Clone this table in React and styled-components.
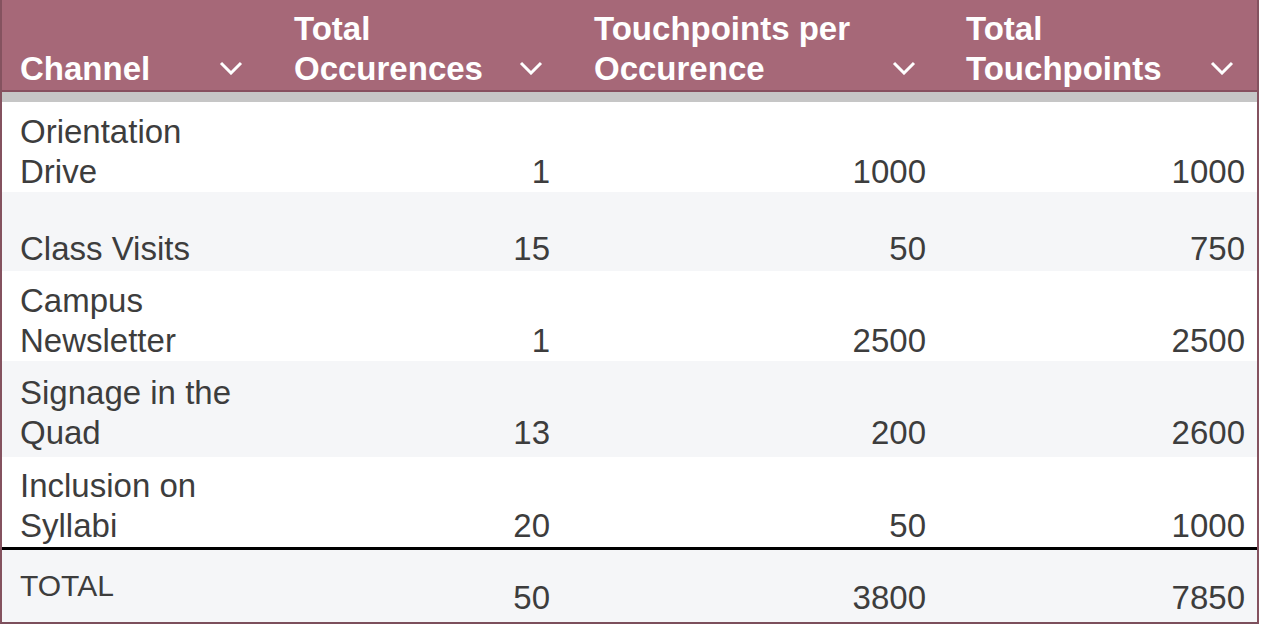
import React from "react";
import styled, { createGlobalStyle } from "styled-components";

const GlobalStyle = createGlobalStyle`
  body {
    margin: 0;
    background: #ffffff;
    font-family: "Liberation Sans", Arial, sans-serif;
  }
`;

const COLS = "274px 300px 372px 1fr";

const Table = styled.div`
  width: 1259px;
  border-left: 2px solid #84525f;
  border-right: 2px solid #84525f;
  border-bottom: 2px solid #7c4f5c;
  box-sizing: border-box;
`;

const HeaderRow = styled.div`
  display: grid;
  grid-template-columns: ${COLS};
  height: 92px;
  box-sizing: border-box;
  background: #a66878;
  border-bottom: 2px solid #87505f;
`;

const HeadCell = styled.div`
  display: flex;
  align-items: flex-end;
  justify-content: space-between;
  padding: 0 ${(p) => p.$pr}px 1px 18px;
`;

const HeadLabel = styled.div`
  color: #ffffff;
  font-size: 33px;
  line-height: 40px;
  font-weight: 700;
`;

const Chevron = styled.svg`
  flex: none;
  margin-bottom: 14px;
`;

const Divider = styled.div`
  height: 10px;
  background: #c6c6c6;
`;

const Row = styled.div`
  display: grid;
  grid-template-columns: ${COLS};
  height: ${(p) => p.$h}px;
  background: ${(p) => (p.$alt ? "#f5f6f8" : "#ffffff")};
`;

const TotalRow = styled(Row)`
  border-top: 3px solid #000000;
`;

const Cell = styled.div`
  display: flex;
  align-items: ${(p) => (p.$middle ? "center" : "flex-end")};
  justify-content: ${(p) => (p.$num ? "flex-end" : "flex-start")};
  padding: 0 ${(p) => p.$pr || 0}px ${(p) => p.$pb}px 18px;
  color: #3d3d3d;
  font-size: ${(p) => (p.$small ? 30 : 33)}px;
  line-height: 40px;
`;

const headers = [
  { label: "Channel", pr: 33 },
  { label: ["Total", "Occurences"], pr: 33 },
  { label: ["Touchpoints per", "Occurence"], pr: 32 },
  { label: ["Total", "Touchpoints"], pr: 23 },
];

const numPad = [26, 22, 12];

const rows = [
  { name: ["Orientation", "Drive"], vals: [1, 1000, 1000], h: 90, pb: 0 },
  { name: ["Class Visits"], vals: [15, 50, 750], h: 79, pb: 2 },
  { name: ["Campus", "Newsletter"], vals: [1, 2500, 2500], h: 90, pb: 0 },
  { name: ["Signage in the", "Quad"], vals: [13, 200, 2600], h: 96, pb: 4 },
  { name: ["Inclusion on", "Syllabi"], vals: [20, 50, 1000], h: 90, pb: 1 },
];

const Lines = ({ parts }) =>
  [].concat(parts).map((t, i) => (
    <React.Fragment key={i}>
      {i > 0 && <br />}
      {t}
    </React.Fragment>
  ));

function ChevronDown() {
  return (
    <Chevron width="24" height="14" viewBox="0 0 24 14">
      <polyline
        points="2,2 12,12 22,2"
        fill="none"
        stroke="#ffffff"
        strokeWidth="3"
      />
    </Chevron>
  );
}

export default function App() {
  const total = [0, 1, 2].map((c) => rows.reduce((s, r) => s + r.vals[c], 0));

  return (
    <>
      <GlobalStyle />
      <Table>
        <HeaderRow>
          {headers.map((h, i) => (
            <HeadCell key={i} $pr={h.pr}>
              <HeadLabel>
                <Lines parts={h.label} />
              </HeadLabel>
              <ChevronDown />
            </HeadCell>
          ))}
        </HeaderRow>
        <Divider />
        {rows.map((r, i) => (
          <Row key={i} $h={r.h} $alt={i % 2 === 1}>
            <Cell $pb={r.pb}>
              <div>
                <Lines parts={r.name} />
              </div>
            </Cell>
            {r.vals.map((v, j) => (
              <Cell key={j} $num $pb={r.pb} $pr={numPad[j]}>
                {v}
              </Cell>
            ))}
          </Row>
        ))}
        <TotalRow $h={72} $alt>
          <Cell $middle $small $pb={0}>
            TOTAL
          </Cell>
          {total.map((v, j) => (
            <Cell key={j} $num $pb={4} $pr={numPad[j]}>
              {v}
            </Cell>
          ))}
        </TotalRow>
      </Table>
    </>
  );
}
